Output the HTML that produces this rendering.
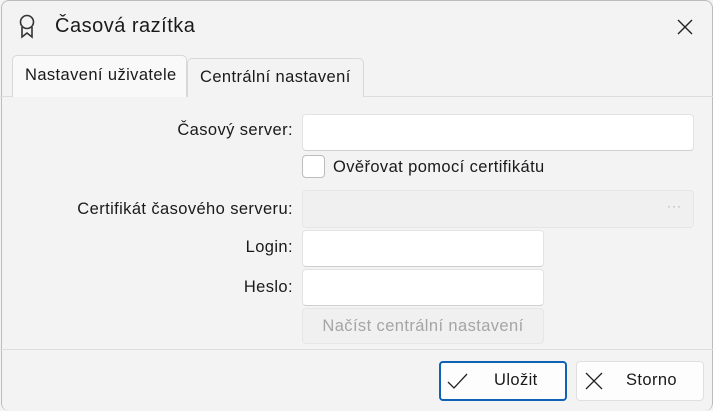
<!DOCTYPE html>
<html><head><meta charset="utf-8"><style>
*{box-sizing:border-box;margin:0;padding:0}
body{width:713px;height:411px;background:#f3f3f3;font-family:"Liberation Sans","DejaVu Sans",sans-serif;color:#1a1a1a;position:relative;overflow:hidden;font-size:16.5px;letter-spacing:0.4px}
.a{position:absolute}
.win{left:1px;top:0;width:712px;height:411px;border:1px solid #bcbcbc;border-radius:8px;border-bottom:none}
.inp{position:absolute;background:#fff;border:1px solid #e3e3e3;border-bottom-color:#cfcfcf;border-radius:4px}
.lbl{position:absolute;right:420px;text-align:right;white-space:nowrap}
.btn{position:absolute;background:#fdfdfd;border:1px solid #e0e0e0;border-radius:4px}
</style></head><body>
<div class="a win"></div>
<svg class="a" style="left:16px;top:13px" width="22" height="26" viewBox="0 0 22 26" fill="none" stroke="#333" stroke-width="1.6"><circle cx="11" cy="9" r="6.5"/><path d="M6 14 V24 L11 20 L16 24 V14"/></svg>
<div class="a" style="left:55px;top:15px;font-size:20px;letter-spacing:0.5px">Časová razítka</div>
<svg class="a" style="left:677px;top:19px" width="16" height="16" viewBox="0 0 16 16" stroke="#222" stroke-width="1.4"><path d="M1 1L15 15M15 1L1 15"/></svg>
<div class="a" style="left:0;top:96px;width:713px;height:1px;background:#dcdcdc"></div>
<div class="a" style="left:12px;top:55px;width:175px;height:42px;background:#f9f9f9;border:1px solid #d8d8d8;border-bottom:none;border-radius:5px 5px 0 0"></div>
<div class="a" style="left:25px;top:66px">Nastavení uživatele</div>
<div class="a" style="left:187px;top:58px;width:177px;height:39px;background:#f3f3f3;border:1px solid #d8d8d8;border-bottom:none;border-radius:5px 5px 0 0"></div>
<div class="a" style="left:200px;top:68px">Centrální nastavení</div>

<div class="lbl" style="top:121px">Časový server:</div>
<div class="inp" style="left:302px;top:114px;width:392px;height:37px"></div>
<div class="inp" style="left:302px;top:155px;width:23px;height:23px;border-color:#bdbdbd"></div>
<div class="a" style="left:333px;top:158px">Ověřovat pomocí certifikátu</div>
<div class="lbl" style="top:200px">Certifikát časového serveru:</div>
<div class="inp" style="left:302px;top:190px;width:392px;height:38px;background:#f0f0f0;border-color:#e6e6e6"></div>
<div class="a" style="left:667px;top:199px;color:#aaa;font-size:12px;letter-spacing:1px">···</div>
<div class="lbl" style="top:238px">Login:</div>
<div class="inp" style="left:302px;top:230px;width:242px;height:37px"></div>
<div class="lbl" style="top:278px">Heslo:</div>
<div class="inp" style="left:302px;top:269px;width:242px;height:37px"></div>
<div class="inp" style="left:302px;top:308px;width:242px;height:36px;background:#f0f0f0;border-color:#e6e6e6;color:#a5a5a5;text-align:center;line-height:34px">Načíst centrální nastavení</div>

<div class="a" style="left:0;top:349px;width:713px;height:1px;background:#dedede"></div>
<div class="btn" style="left:439px;top:361px;width:128px;height:40px;border:2px solid #0f63b5"></div>
<svg class="a" style="left:447px;top:372px" width="22" height="18" viewBox="0 0 22 18" fill="none" stroke="#222" stroke-width="1.3"><path d="M1 10L7 16L20 2"/></svg>
<div class="a" style="left:494px;top:371px">Uložit</div>
<div class="btn" style="left:576px;top:361px;width:128px;height:40px"></div>
<svg class="a" style="left:585px;top:372px" width="18" height="18" viewBox="0 0 18 18" stroke="#222" stroke-width="1.3"><path d="M1 1L17 17M17 1L1 17"/></svg>
<div class="a" style="left:626px;top:371px">Storno</div>
</body></html>
